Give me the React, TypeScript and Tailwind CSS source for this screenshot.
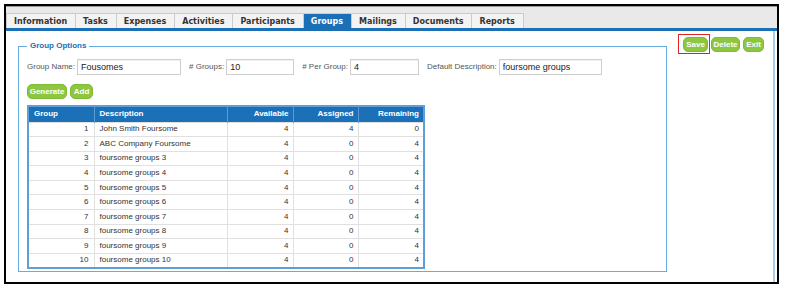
import React from "react";

const tabs = [
  "Information",
  "Tasks",
  "Expenses",
  "Activities",
  "Participants",
  "Groups",
  "Mailings",
  "Documents",
  "Reports",
];

const rows: [number, string, number, number, number][] = [
  [1, "John Smith Foursome", 4, 4, 0],
  [2, "ABC Company Foursome", 4, 0, 4],
  [3, "foursome groups 3", 4, 0, 4],
  [4, "foursome groups 4", 4, 0, 4],
  [5, "foursome groups 5", 4, 0, 4],
  [6, "foursome groups 6", 4, 0, 4],
  [7, "foursome groups 7", 4, 0, 4],
  [8, "foursome groups 8", 4, 0, 4],
  [9, "foursome groups 9", 4, 0, 4],
  [10, "foursome groups 10", 4, 0, 4],
];

function GreenButton({ label, w }: { label: string; w: string }) {
  return (
    <button
      className={`${w} h-[15px] rounded-[5px] bg-[#8dc63f] border border-[#80bb35] text-white font-bold text-[8px] leading-none flex items-center justify-center font-['Liberation_Sans',Arial,sans-serif]`}
    >
      {label}
    </button>
  );
}

function Field({
  label,
  value,
  w,
}: {
  label: string;
  value: string;
  w: string;
}) {
  return (
    <div className="flex items-center gap-[2px]">
      <span className="text-[8px] text-[#555] leading-none">{label}</span>
      <div
        className={`${w} h-[16px] border border-[#cfcfcf] bg-white pl-[3px] flex items-center text-[9px] text-[#222] leading-none shadow-[inset_0_1px_1px_rgba(0,0,0,0.06)]`}
      >
        {value}
      </div>
    </div>
  );
}

export default function App() {
  return (
    <div className="w-[786px] h-[287px] bg-white pt-[4px] pl-[4px] font-['Liberation_Sans',Arial,sans-serif]">
      <div className="w-[775px] h-[280px] border-2 border-black flex flex-col bg-white">
        {/* tab bar */}
        <div className="h-[22px] bg-[#e9e9e9] pt-[6px] flex items-stretch border-t border-[#9a9a9a]">
          {tabs.map((t) => {
            const active = t === "Groups";
            return (
              <div
                key={t}
                className={`h-[16px] pl-[7px] pr-[8px] flex items-center border-r border-t border-[#cbcbcb] first:border-l text-[8px] font-bold leading-none font-['DejaVu_Sans',Verdana,sans-serif] ${
                  active ? "bg-[#1a6fb7] text-white border-[#1a6fb7]" : "bg-[#f3f3f3] text-[#333]"
                }`}
              >
                {t}
              </div>
            );
          })}
        </div>
        <div className="h-[3px] bg-[#1a6fb5]" />

        {/* content panel */}
        <div className="flex-1 flex items-start border-r-2 border-[#a9cce9] mr-[2px] bg-white">
          <fieldset className="ml-[12px] mt-[9px] w-[649px] border border-[#66addf] px-[8px] pb-[2px]">
            <legend className="px-[3px] text-[8px] leading-[12px] font-bold text-[#1a6fb5]">
              Group Options
            </legend>
            <div className="pt-[7px] flex items-center gap-[8px]">
              <Field label="Group Name:" value="Fousomes" w="w-[104px]" />
              <Field label="# Groups:" value="10" w="w-[68px]" />
              <Field label="# Per Group:" value="4" w="w-[69px]" />
              <Field label="Default Description:" value="foursome groups" w="w-[103px]" />
            </div>
            <div className="mt-[9px] flex gap-[3px]">
              <GreenButton label="Generate" w="w-[40px]" />
              <GreenButton label="Add" w="w-[23px]" />
            </div>
            <table className="mt-[6px] border-collapse border-2 border-[#5d9fd6] w-[396px] table-fixed text-[8px] leading-none">
              <colgroup>
                <col className="w-[66px]" />
                <col className="w-[133px]" />
                <col className="w-[66px]" />
                <col className="w-[65px]" />
                <col className="w-[66px]" />
              </colgroup>
              <thead>
                <tr className="h-[16px] bg-[#1b70b8] text-white font-bold">
                  <th className="text-left pl-[5px] border-r border-[#5d9ad2]">Group</th>
                  <th className="text-left pl-[5px] border-r border-[#5d9ad2]">Description</th>
                  <th className="text-right pr-[4px] border-r border-[#5d9ad2]">Available</th>
                  <th className="text-right pr-[4px] border-r border-[#5d9ad2]">Assigned</th>
                  <th className="text-right pr-[4px]">Remaining</th>
                </tr>
              </thead>
              <tbody className="text-[#333]">
                {rows.map((r) => (
                  <tr key={r[0]} className="h-[14.6px]">
                    <td className="text-right pr-[5px] border border-[#e0e0e0]">{r[0]}</td>
                    <td className="text-left pl-[5px] border border-[#e0e0e0]">{r[1]}</td>
                    <td className="text-right pr-[4px] border border-[#e0e0e0]">{r[2]}</td>
                    <td className="text-right pr-[4px] border border-[#e0e0e0]">{r[3]}</td>
                    <td className="text-right pr-[4px] border border-[#e0e0e0]">{r[4]}</td>
                  </tr>
                ))}
              </tbody>
            </table>
          </fieldset>

          <div className="ml-auto mr-[9px] mt-[3px] flex items-start">
            <div className="border border-[#e02424] pt-[2px] pb-[1px] pl-[4px] pr-[1px]">
              <GreenButton label="Save" w="w-[25px]" />
            </div>
            <div className="mt-[3px] ml-[1px] flex gap-[3px]">
              <GreenButton label="Delete" w="w-[29px]" />
              <GreenButton label="Exit" w="w-[21px]" />
            </div>
          </div>
        </div>
      </div>
    </div>
  );
}
